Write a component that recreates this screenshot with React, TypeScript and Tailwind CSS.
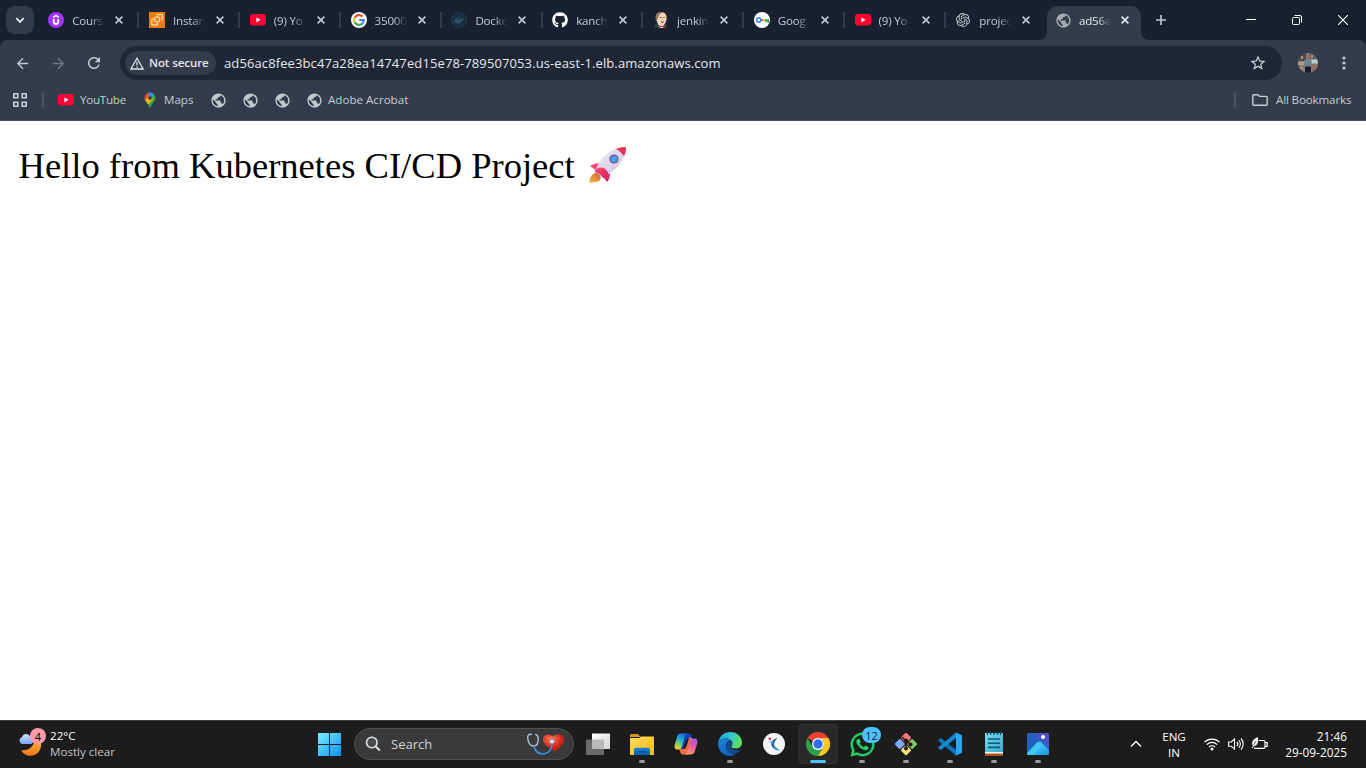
import React from "react";
import { FaGithub, FaWhatsapp } from "react-icons/fa";
import { SiOpenai, SiDocker } from "react-icons/si";
import { MdPublic, MdOutlineStarBorder, MdRefresh, MdArrowBack, MdArrowForward } from "react-icons/md";

const ui = "font-['Open_Sans','Noto_Sans',sans-serif]";

const YouTube = () => (
  <svg width="16" height="16" viewBox="0 0 16 16">
    <rect x="0" y="2" width="16" height="11.6" rx="3" fill="#ff0033" />
    <path d="M6.4 5.4v4.8l4.2-2.4z" fill="#fff" />
  </svg>
);

const Udemy = () => (
  <svg width="16" height="16" viewBox="0 0 16 16">
    <circle cx="8" cy="8" r="8" fill="#a435f0" />
    <path d="M5 5.4 8 3.6l3 1.8" fill="none" stroke="#fff" strokeWidth="1.5" />
    <path d="M5.8 7v2.7c0 3 4.4 3 4.4 0V7" fill="none" stroke="#fff" strokeWidth="1.8" />
  </svg>
);

const Aws = () => (
  <svg width="16" height="16" viewBox="0 0 16 16">
    <rect width="16" height="16" fill="#ed7d0c" />
    <g fill="none" stroke="#fff" strokeWidth="0.9">
      <rect x="5.8" y="5" width="4.8" height="4.8" rx="0.4" />
      <path d="M8 3.2V2.6h5.2v5.3h-1.1M5 7H2.8v6h5.5v-2" />
    </g>
  </svg>
);

const GoogleG = () => (
  <svg width="16" height="16" viewBox="0 0 16 16">
    <circle cx="8" cy="8" r="8" fill="#fff" />
    <g fill="none" strokeWidth="2.2">
      <path d="M11.5 4.6A4.9 4.9 0 0 0 3.7 5.7" stroke="#ea4335" />
      <path d="M3.7 5.6a4.9 4.9 0 0 0 0 4.8" stroke="#fbbc05" />
      <path d="M3.7 10.3a4.9 4.9 0 0 0 7.6 1.2" stroke="#34a853" />
      <path d="M11.2 11.6A4.9 4.9 0 0 0 12.9 8H8.2" stroke="#4285f4" />
    </g>
  </svg>
);

const Docker = () => (
  <svg width="16" height="16" viewBox="0 0 16 16">
    <circle cx="8" cy="8" r="7.4" fill="#182c3d" stroke="#244257" />
    <svg x="3" y="3" width="10" height="10">
      <SiDocker size={10} color="#2d5268" />
    </svg>
  </svg>
);

const Jenkins = () => (
  <svg width="16" height="16" viewBox="0 0 16 16">
    <path d="M1.500 16c.2-3 1.500-4.500 3-5.500h6.500c2 1 3.200 3 3.400 5.500z" fill="#33404a" />
    <path d="M4.500 10.500 7 16h3l1.500-5z" fill="#fff" />
    <path d="M3 5C3 1.700 5 .3 8 .3c3.600 0 5.600 2 5.600 5.400 0 4.600-2 7.300-4.800 7.300C5.500 13 3 9.600 3 5z" fill="#f0d6b7" />
    <path d="M3.600 9C1.600 5.500 2.500 1 6.200.4 7.500 0 9 0 10 .5 7 1 5.800 3 5 6z" fill="#8d7362" />
    <path d="M6.800 5.500h1.700M10.200 5.500h1.500M8 9.800q1.400.9 2.900 0" stroke="#5d463d" strokeWidth="1" fill="none" />
    <path d="m6.400 13 2.400 1 2.800-1v2.700L8.800 15l-2.400.7z" fill="#d33833" />
  </svg>
);

const GoogleKey = () => (
  <svg width="16" height="16" viewBox="0 0 16 16">
    <circle cx="8" cy="8" r="8" fill="#fff" />
    <circle cx="4.700" cy="8" r="2.100" fill="none" stroke="#4285f4" strokeWidth="1.600" />
    <path d="M7.200 7.200H9v1.800H7.200z" fill="#ea4335" />
    <path d="M9 7.200h2v1.800H9z" fill="#fbbc05" />
    <path d="M11 7.200h4V11h-1.500V9.200h-1v1.400H11z" fill="#34a853" />
  </svg>
);

const Maps = () => (
  <svg width="16" height="16" viewBox="0 0 16 16">
    <defs>
      <clipPath id="pin">
        <path d="M8 .5a5.400 5.400 0 0 1 5.400 5.400c0 3.500-3.400 4.400-4.600 9-.2.9-1.400.9-1.600 0-1.200-4.600-4.600-5.500-4.600-9A5.400 5.400 0 0 1 8 .5z" />
      </clipPath>
    </defs>
    <g clipPath="url(#pin)">
      <path d="M0 0h16v16H0z" fill="#34a853" />
      <path d="M1 1 8 6 2 9z" fill="#ea4335" />
      <path d="m2 10 6-8 3 5-6 7z" fill="#fbbc04" />
      <path d="M5.500 0H14L7.800 6.100z" fill="#4285f4" />
      <path d="M1 0h3.800L7 3.200 3.400 6.600z" fill="#ea4335" />
    </g>
    <circle cx="8" cy="5.900" r="1.900" fill="#343b4b" />
  </svg>
);

const Globe = () => <MdPublic size={17} color="#c4c7cc" className="-m-[0.5px]" />;

const CloseX = ({ color = "#c0c8d8" }: { color?: string }) => (
  <svg width="8" height="8" viewBox="0 0 8 8" className="shrink-0">
    <path d="m.6.6 6.800 6.800M7.400.6.6 7.400" stroke={color} strokeWidth="1.600" />
  </svg>
);

const tabs: { icon: React.ReactNode; title: string }[] = [
  { icon: <Udemy />, title: "Cours" },
  { icon: <Aws />, title: "Instan" },
  { icon: <YouTube />, title: "(9) Yo" },
  { icon: <GoogleG />, title: "35000" },
  { icon: <Docker />, title: "Docke" },
  { icon: <FaGithub size={16} color="#fff" />, title: "kanch" },
  { icon: <Jenkins />, title: "jenkin" },
  { icon: <GoogleKey />, title: "Goog" },
  { icon: <YouTube />, title: "(9) Yo" },
  { icon: <SiOpenai size={14} color="#c7cbd2" />, title: "projec" },
];

const fade = "[mask-image:linear-gradient(to_right,#000_19px,transparent_32px)]";

const TabStrip = () => (
  <div className="flex h-10 bg-[#192131] text-[11.6px] tracking-[-0.2px]">
    <div className="flex w-[38.200px] shrink-0 items-center pl-[6px]">
      <div className="flex size-7 items-center justify-center rounded-[9px] bg-[#343b4b]">
        <svg width="10" height="7" viewBox="0 0 10 7">
          <path d="m1.300 1.200 3.700 3.700 3.700-3.700" fill="none" stroke="#e3e6ec" strokeWidth="1.800" />
        </svg>
      </div>
    </div>
    {tabs.map((t, i) => (
      <div key={i} className="flex w-[100.800px] shrink-0 items-center pl-[10px]">
        <span className="flex w-4 shrink-0 justify-center">{t.icon}</span>
        <span className={`ml-2 w-[38px] shrink-0 pt-px whitespace-nowrap text-[#c4cad6] ${fade}`}>{t.title}</span>
        <span className="ml-[5px] flex"><CloseX /></span>
        {i < 9 && <span className="ml-[14.300px] h-4 w-[2px] shrink-0 bg-[#343b4b]" />}
      </div>
    ))}
    <div className="ml-[-7.200px] flex w-[110px] shrink-0 items-end">
      <svg width="8" height="8" viewBox="0 0 8 8"><path d="M8 0v8H0a8 8 0 0 0 8-8z" fill="#343b4b" /></svg>
      <div className="flex h-[34px] w-[94px] items-center rounded-t-[10px] bg-[#343b4b] pb-[6px] pl-2">
        <MdPublic size={17} color="#a9adb3" className="shrink-0" />
        <span className={`ml-[7px] w-[38px] shrink-0 pt-px whitespace-nowrap text-[#e3e6ec] ${fade}`}>ad56a</span>
        <span className="ml-[4px] flex"><CloseX color="#e3e6ec" /></span>
      </div>
      <svg width="8" height="8" viewBox="0 0 8 8"><path d="M0 0v8h8a8 8 0 0 1-8-8z" fill="#343b4b" /></svg>
    </div>
    <div className="flex flex-1 items-center pl-[7px]">
      <svg width="10" height="10" viewBox="0 0 10 10"><path d="M5 0v10M0 5h10" stroke="#c0c8d8" strokeWidth="1.600" /></svg>
      <svg width="10" height="10" viewBox="0 0 10 10" className="ml-[80px]"><path d="M0 4.500h10" stroke="#fff" /></svg>
      <svg width="10" height="10" viewBox="0 0 10 10" className="ml-[36px]">
        <g fill="none" stroke="#fff"><rect x=".5" y="2.500" width="7" height="7" rx="1" /><path d="M2.500.5H8A1.500 1.500 0 0 1 9.500 2v5.500" /></g>
      </svg>
      <svg width="10" height="10" viewBox="0 0 10 10" className="ml-[36px]"><path d="m0 0 10 10M10 0 0 10" stroke="#fff" strokeWidth="1.100" /></svg>
    </div>
  </div>
);

const Avatar = () => (
  <svg width="20" height="20" viewBox="0 0 20 20">
    <defs><clipPath id="av"><circle cx="10" cy="10" r="10" /></clipPath></defs>
    <g clipPath="url(#av)">
      <path d="M0 0h20v20H0z" fill="#8f7d70" />
      <path d="M0 0h8v8H0z" fill="#4a4b4a" /><path d="M11 0h9v6h-9z" fill="#5c6063" />
      <path d="M13 6.500h7v4h-7z" fill="#b9cbd4" /><path d="M0 9h6v3H0z" fill="#b49c8a" />
      <path d="M6 7.500c2-2 6-2 7.500 0L14 14H6z" fill="#73808d" />
      <path d="M3 3h2v3H3zM13 2h2v3h-2zM2 14h3v2H2z" fill="#ad9180" />
      <circle cx="10" cy="4" r="2.100" fill="#a66f55" />
      <path d="M7 13.500h6V20H7z" fill="#171c31" />
      <path d="M13.500 12h7v6h-7z" fill="#97705e" />
    </g>
  </svg>
);

const Toolbar = () => (
  <div className="bg-[#192131]">
    <div className="h-[81px] rounded-t-[8px] border-b border-[#4b515e] bg-[#343b4b]">
      <div className="flex h-[46px] items-center">
        <MdArrowBack size={17} color="#c0c8d8" className="ml-[13.500px]" />
        <MdArrowForward size={17} color="#6f7684" className="ml-[19px]" />
        <MdRefresh size={18} color="#c7ccd6" className="ml-[18.500px]" />
        <div className="ml-[17px] flex h-[34px] w-[1162px] items-center rounded-full bg-[#1f2737] pl-[5px]">
          <div className="flex h-6 w-[91px] items-center rounded-full bg-[#343b4b] pl-[5px]">
            <svg width="14" height="13" viewBox="0 0 14 13">
              <path d="M7 1.200 13.100 12H.9z" fill="none" stroke="#dfe2e8" strokeWidth="1.300" />
              <path d="M7 4.800v3.500M7 9.300v1.400" stroke="#dfe2e8" strokeWidth="1.300" />
            </svg>
            <span className="ml-[5px] text-[11.5px] font-semibold tracking-[-0.08px] whitespace-nowrap text-[#e3e6ec]">Not secure</span>
          </div>
          <span className="ml-2 w-[1025px] pt-px text-[13px] tracking-[0.11px] whitespace-nowrap text-[#e6e8ed]">ad56ac8fee3bc47a28ea14747ed15e78-789507053.us-east-1.elb.amazonaws.com</span>
          <MdOutlineStarBorder size={18} color="#d0d3da" />
        </div>
        <span className="ml-[16px] flex"><Avatar /></span>
        <svg width="4" height="14" viewBox="0 0 4 14" className="ml-[24px]"><g fill="#c7ccd6"><circle cx="2" cy="2" r="1.600" /><circle cx="2" cy="7" r="1.600" /><circle cx="2" cy="12" r="1.600" /></g></svg>
      </div>
      <div className="flex h-[28px] items-center text-[11.6px] tracking-[-0.25px] text-[#c7ccd6]">
        <svg width="14" height="14" viewBox="0 0 14 14" className="ml-[13px]">
          <g fill="none" stroke="#c7ccd6" strokeWidth="1.600"><path d="M.8.8h4v4h-4zM9.200.8h4v4h-4zM.8 9.200h4v4h-4zM9.200 9.200h4v4h-4z" /></g>
        </svg>
        <span className="ml-[15px] h-4 w-[2px] bg-[#4c5464]" />
        <span className="ml-[14px] flex"><YouTube /></span>
        <span className="ml-[6px] w-[46px] whitespace-nowrap">YouTube</span>
        <span className="ml-[16px] flex"><Maps /></span>
        <span className="ml-[6px] w-[30px] tracking-normal whitespace-nowrap">Maps</span>
        <span className="ml-[16px] flex gap-4"><Globe /><Globe /><Globe /><Globe /></span>
        <span className="ml-[6px] tracking-normal whitespace-nowrap">Adobe Acrobat</span>
        <span className="ml-auto h-4 w-[2px] bg-[#4c5464]" />
        <svg width="16" height="12" viewBox="0 0 16 12" className="ml-4"><path d="M.8 2v8.200c0 .6.4 1 1 1h12.400c.6 0 1-.4 1-1V3.400c0-.6-.4-1-1-1H7.600L6 .8H1.800c-.6 0-1 .4-1 1z" fill="none" stroke="#c7ccd6" strokeWidth="1.400" /></svg>
        <span className="ml-2 w-[90px] tracking-[-0.15px] whitespace-nowrap">All Bookmarks</span>
      </div>
    </div>
  </div>
);

const Rocket = () => (
  <svg width="40" height="38" viewBox="0 0 40 38" role="img" aria-label="🚀">
    <defs>
      <linearGradient id="body" x1="0" y1="0" x2="1" y2="1"><stop stopColor="#f5edfa" /><stop offset="1" stopColor="#cdbfdb" /></linearGradient>
      <linearGradient id="fin" x1="0" y1="0" x2="1" y2="1"><stop stopColor="#ff4f76" /><stop offset="1" stopColor="#d61c60" /></linearGradient>
      <linearGradient id="flame" x1="1" y1="0" x2="0" y2="1"><stop stopColor="#c56840" /><stop offset="1" stopColor="#ffb23c" /></linearGradient>
    </defs>
    <path d="M13 17c-4 0-8 1-11 3l7 5zM22 27c0 3-1 6.500-2.500 9L14 30z" fill="url(#fin)" />
    <path d="M7 26c2-8 8-17 17-21.500C29 2 34 1 38 1.500 38 6 36 12 31 19c-5 6-11 10-18 12z" fill="url(#body)" />
    <path d="M28 3c4-1.600 7-2 10-1.500C38.200 4 37.500 7 36 10.500 34 7 31 4.500 28 3z" fill="#ea3156" />
    <path d="M6.500 26c1-3.500 5-5.500 9-4 3 1.500 5 4 4.500 7L15 32c-1.500-3-4.500-5.500-8.500-6z" fill="url(#fin)" />
    <path d="M4 29c2.500-3 6.500-2.500 8 0 1.500 3 .5 6-3 6.700-3 .3-4.500.6-7.500 1.300 0-3 0-5.500 2.500-8z" fill="url(#flame)" />
    <circle cx="26" cy="13" r="4.600" fill="#615b83" /><circle cx="26" cy="13" r="3.300" fill="#459cf0" />
  </svg>
);

const Weather = () => (
  <div className="relative size-7 shrink-0">
    <svg width="28" height="28" viewBox="0 0 28 28">
      <defs>
        <linearGradient id="moon" x1="0" y1="0" x2="0" y2="1"><stop stopColor="#ffc43a" /><stop offset="1" stopColor="#f0761c" /></linearGradient>
        <linearGradient id="cloud" x1="0" y1="0" x2="0" y2="1"><stop stopColor="#cddfff" /><stop offset="1" stopColor="#78a4ee" /></linearGradient>
      </defs>
      <path d="M17 5c6.500 2 8 11 4 16.500-5 6.500-14.500 5.500-18-1.500 8 1.500 14.500-4 14-15z" fill="url(#moon)" />
      <path d="M4 14a3.700 3.700 0 0 1 0-7C5 3.500 10 3 12 6.500c4 0 5 6.500 1 7.500z" fill="url(#cloud)" />
    </svg>
    <span className="absolute -top-[2px] left-[12px] flex size-4 items-center justify-center rounded-full bg-[#ff9aa6] text-[11px] leading-none text-black">4</span>
  </div>
);

const TaskView = () => (
  <svg width="24" height="24" viewBox="0 0 24 24">
    <defs><linearGradient id="tv" x2="1" y2="1"><stop stopColor="#fff" /><stop offset="1" stopColor="#d5d5d5" /></linearGradient></defs>
    <path d="M0 7.500h18V23H0z" fill="#6a6a6a" /><path d="M6 1.500h18V17H6z" fill="url(#tv)" /><path d="M6 7.500h12V17H6z" fill="#b9b9b9" />
  </svg>
);

const Folder = () => (
  <svg width="24" height="24" viewBox="0 0 24 24">
    <defs>
      <linearGradient id="fo" x2="1" y2="1"><stop stopColor="#ffd964" /><stop offset="1" stopColor="#f9b916" /></linearGradient>
      <linearGradient id="fob" x2="0" y2="1"><stop stopColor="#1488dd" /><stop offset="1" stopColor="#0b5fae" /></linearGradient>
    </defs>
    <path d="M0 3.500C0 2.500.5 2 1.500 2H8l2.500 3H0z" fill="#d29a0b" /><path d="M0 6h9l2-1.500h13V23H0z" fill="url(#fo)" />
    <path d="M4 23v-5.500c0-1 .8-1.800 1.800-1.800h12.400c1 0 1.800.8 1.800 1.800V23z" fill="url(#fob)" /><path d="M8 19h8v1.500H8z" fill="#0a4f94" />
  </svg>
);

const Copilot = () => (
  <svg width="24" height="24" viewBox="0 0 24 24">
    <defs>
      <linearGradient id="c1" x1=".7" y1="0" x2=".3" y2="1"><stop stopColor="#1864da" /><stop offset=".45" stopColor="#24b6d0" /><stop offset=".75" stopColor="#8fd15e" /><stop offset="1" stopColor="#f5cc22" /></linearGradient>
      <linearGradient id="c2" x1=".7" y1="0" x2=".3" y2="1"><stop stopColor="#aa58ee" /><stop offset=".5" stopColor="#ec5b93" /><stop offset="1" stopColor="#ffa35c" /></linearGradient>
    </defs>
    <path d="M10 1.500h5c2 0 2.500 1.500 3 3l.6 2.500H15c-2 0-2.800 1-3.300 2.600L8.500 19 5 17z" fill="#153fae" />
    <path d="M14 22.500H9c-2 0-2.500-1.500-3-3l-.6-2.500H9c2 0 2.800-1 3.300-2.600L15.500 5 19 7z" fill="#f36a4d" />
    <path d="M7 1.500h7c-2 0-2.700 1.800-3.300 3.700l-3 9.800C7 17 6 17.500 4 17.500c-3 0-4-2-3.300-4.500l2.700-9C4 2.400 5 1.500 7 1.500z" fill="url(#c1)" />
    <path d="M17 22.500h-7c2 0 2.700-1.800 3.300-3.700l3-9.800C17 7 18 6.500 20 6.500c3 0 4 2 3.300 4.500l-2.700 9c-.6 1.600-1.600 2.500-3.600 2.500z" fill="url(#c2)" />
  </svg>
);

const Edge = () => (
  <svg width="24" height="24" viewBox="0 0 24 24">
    <defs>
      <linearGradient id="e1" x1="0" y1="0" x2="1" y2=".3"><stop stopColor="#1c9fe5" /><stop offset=".55" stopColor="#2ec4d2" /><stop offset="1" stopColor="#62df5b" /></linearGradient>
      <linearGradient id="e2" x1="0" y1="0" x2=".6" y2="1"><stop stopColor="#1c87df" /><stop offset="1" stopColor="#0e5fb9" /></linearGradient>
    </defs>
    <path d="M.2 11C.8 4.500 6 0 12.200 0 19 0 24 5 24 10.500c0 4-3 6-6.300 6-3 0-4.300-1-4.300-2 0-.8 1-1 1-3 0-3-3-5-6.500-5C4 6.500 1 8.500.2 11z" fill="url(#e1)" />
    <path d="M.2 11C1 8.500 4 6.500 7.800 6.500c2 0 4 .8 5.200 2-4 .2-5.600 4-4.600 7.500 1.400 4.500 6 6.500 10 5.500-2 1.500-4 2.500-6.500 2.500C5 24-.4 18 .2 11z" fill="url(#e2)" />
    <path d="M12 9.200c-3 1.300-4 4-3.200 7 1.200 4.500 6.200 6.800 11.200 4.300 1.500-1 2.500-2 3-3.200-4 2-8.600 1-10-2.300-.5-1.600 1.500-2 1.300-4-.1-.8-1-1.500-2.300-1.800z" fill="#124b8e" />
  </svg>
);

const Runner = () => (
  <svg width="24" height="24" viewBox="0 0 24 24">
    <circle cx="12" cy="12" r="11" fill="#f3f5f8" />
    <path d="M15.500 6C10.500 7.500 8.500 10 9.500 13.500c1 3 4 4.500 8 5-3.500-2-5.500-3.500-5.500-6 0-2.500 1.500-4.500 3.500-6.500z" fill="#1d5b97" />
    <path d="M7 9.500 11.500 9.200 10.500 12c-1-.8-2-1.600-3.500-2.500z" fill="#3aa0d2" />
    <path d="m11.800 13 5.700 5.500-6-3z" fill="#39a4d6" />
    <circle cx="7.800" cy="6.800" r="1.300" fill="#e43434" />
  </svg>
);

const Chrome = () => (
  <svg width="24" height="24" viewBox="0 0 24 24">
    <path d="M12 12 1.600 6A12 12 0 0 1 22.400 6L12 6z" fill="#e84335" />
    <path d="M1.600 6A12 12 0 0 0 12 24l5.200-9L12 12 6.800 15z" fill="#30a04c" />
    <path d="M22.400 6A12 12 0 0 1 12 24l5.200-9A6 6 0 0 0 12 6z" fill="#fcc726" />
    <circle cx="12" cy="12" r="6" fill="#fff" /><circle cx="12" cy="12" r="4.700" fill="#2e74e8" />
  </svg>
);

const WhatsApp = () => (
  <div className="relative size-6">
    <FaWhatsapp size={27} color="#24d366" stroke="#24d366" strokeWidth={9} className="-mt-[1.500px] -ml-[1.500px] max-w-none" />
    <span className="absolute -top-[5px] left-[12px] flex h-4 w-[19px] items-center justify-center rounded-full bg-[#4cc2ff] text-[11px] leading-none text-[#14232d]">12</span>
  </div>
);

const Git = () => (
  <svg width="24" height="24" viewBox="0 0 24 24">
    <g transform="rotate(45 12 12)">
      <rect x="3.800" y="3.800" width="7.600" height="7.600" rx="1" fill="#f37d7d" />
      <rect x="12.600" y="3.800" width="7.600" height="7.600" rx="1" fill="#80c463" />
      <rect x="3.800" y="12.600" width="7.600" height="7.600" rx="1" fill="#7ba8fa" />
      <rect x="12.600" y="12.600" width="7.600" height="7.600" rx="1" fill="#fae080" />
    </g>
    <path d="m8 5 4 4v8M12 8.500l4 3.500" fill="none" stroke="#291916" strokeWidth="1.500" />
    <g fill="#291916"><circle cx="12" cy="8.500" r="2" /><circle cx="12" cy="16.500" r="2" /><circle cx="16.500" cy="12.500" r="2" /></g>
  </svg>
);

const VsCode = () => (
  <svg width="24" height="24" viewBox="0 0 24 24">
    <path d="M.6 7.700 2 6.500c.5-.4 1-.3 1.500 0L18 18v5.500L.6 9c-.4-.4-.4-.9 0-1.300z" fill="#0878c5" />
    <path d="M.6 16.300 2 17.500c.5.4 1 .3 1.500 0L18 6V.5L.6 15c-.4.4-.4.9 0 1.300z" fill="#1489d6" />
    <path d="m17.500.3 5.500 2.400c.7.300 1 .8 1 1.500v15.600c0 .7-.3 1.200-1 1.500l-5.500 2.500c-.6.200-.8 0-1.200-.4.8.7 1.700.2 1.700-.9V1.400c0-1-1-1.500-1.700-.8.4-.4.6-.5 1.200-.3z" fill="#29a8f2" />
  </svg>
);

const Notepad = () => (
  <svg width="24" height="24" viewBox="0 0 24 24">
    <defs><linearGradient id="np" x2="1" y2="1"><stop stopColor="#79dced" /><stop offset="1" stopColor="#38abcd" /></linearGradient></defs>
    <path d="M3 19h18v5H3z" fill="#a85116" /><path d="M3 19h18v2.600H3z" fill="#f2f2f2" /><path d="M3 1h18v19H3z" fill="url(#np)" />
    <path d="M5.500 0v3M8.700 0v3M12 0v3M15.300 0v3M18.500 0v3" stroke="#0e5368" strokeWidth="1.300" />
    <path d="M6 7h12M6 11.200h12M6 15.400h12" stroke="#075b7b" strokeWidth="1.600" />
  </svg>
);

const Photos = () => (
  <svg width="24" height="24" viewBox="0 0 24 24">
    <defs>
      <linearGradient id="ph" x1="0" y1="1" x2="1" y2="0"><stop stopColor="#1265bc" /><stop offset=".55" stopColor="#285fc1" /><stop offset="1" stopColor="#7148ca" /></linearGradient>
      <linearGradient id="mt" x2="1" y2="1"><stop stopColor="#5be4fb" /><stop offset="1" stopColor="#1790e8" /></linearGradient>
      <clipPath id="phc"><rect x="1" y="1" width="22" height="22" rx="1.500" /></clipPath>
    </defs>
    <g clipPath="url(#phc)"><path d="M0 0h24v24H0z" fill="url(#ph)" /><path d="m1 21 10-10.500c1.500-1.500 3-1.500 4.500 0L24 19v5H1z" fill="url(#mt)" /><path d="m1 23 12-11 3 2L7 23z" fill="#52d4f6" opacity=".5" /></g>
    <circle cx="17" cy="5" r="2" fill="#fff" />
  </svg>
);

const apps: { icon: React.ReactNode; running?: boolean; active?: boolean }[] = [
  { icon: <TaskView /> },
  { icon: <Folder />, running: true },
  { icon: <Copilot /> },
  { icon: <Edge />, running: true },
  { icon: <Runner /> },
  { icon: <Chrome />, active: true },
  { icon: <WhatsApp />, running: true },
  { icon: <Git />, running: true },
  { icon: <VsCode />, running: true },
  { icon: <Notepad />, running: true },
  { icon: <Photos />, running: true },
];

const HealthArt = () => (
  <svg width="40" height="24" viewBox="0 0 40 24">
    <defs><radialGradient id="ht" cx=".4" cy=".3"><stop stopColor="#ff805b" /><stop offset="1" stopColor="#cc2018" /></radialGradient></defs>
    <path d="M29 19c-6-2.500-13-7.500-12-12.500 1-5 7-5 9.500-2 3-3 9-3 11 .5 2 5-3 11-8.500 14z" fill="url(#ht)" />
    <path d="M6 2.500C3 1.500 1.500 3 1.700 6c.5 5 3 8.500 6 8 3 0 4.500-3 4.500-7 0-3-1-4.500-3-4.500" fill="none" stroke="#acc3d6" strokeWidth="1.400" />
    <path d="M8 14c1 6 5 8 10 8 5-1 8-5 8-11" fill="none" stroke="#3b8de2" strokeWidth="1.600" />
    <circle cx="26" cy="9.500" r="2.300" fill="#e7eaf0" stroke="#85919e" />
  </svg>
);

const Taskbar = () => (
  <div className="flex h-12 items-center border-t border-[#3b3d3d] bg-[#1c1c1c] pb-px text-[11.6px] text-white">
    <div className="flex w-[318px] items-center pl-[18px]">
      <Weather />
      <div className="ml-[4px] leading-4"><div>22°C</div><div className="text-[#c5c5c5]">Mostly clear</div></div>
    </div>
    <svg width="24" height="24" viewBox="0 0 24 24" className="shrink-0">
      <defs><linearGradient id="win" x2="1" y2="1"><stop stopColor="#7eedff" /><stop offset="1" stopColor="#0793f8" /></linearGradient></defs>
      <path d="M0 1h11v11H0zm12 0h11v11H12zM0 13h11v11H0zm12 0h11v11H12z" fill="url(#win)" />
    </svg>
    <div className="ml-3 flex h-8 w-[220px] shrink-0 items-center rounded-full border border-[#505050] bg-[#3a3a3a] pl-[10px]">
      <svg width="16" height="16" viewBox="0 0 16 16"><circle cx="6.800" cy="6.500" r="5.300" fill="#484b4e" stroke="#dfe2e5" strokeWidth="1.600" /><path d="m10.800 10.500 4 4" stroke="#dfe2e5" strokeWidth="1.900" /></svg>
      <span className="ml-[10px] w-[135px] pt-px text-[13px] text-[#d2d2d2]">Search</span>
      <HealthArt />
    </div>
    <div className="ml-[2px] flex h-full">
      {apps.map((a, i) => (
        <div key={i} className="flex h-full w-11 items-center justify-center">
          <div className={`flex h-10 w-10 flex-col items-center rounded-[4px] pt-2 ${a.active ? "bg-[#292929] ring-1 ring-[#303030] ring-inset" : ""}`}>
            <span className="flex size-6 items-center justify-center">{a.icon}</span>
            {a.active && <span className="mt-1 h-[3px] w-4 rounded-full bg-[#4cc2ff]" />}
            {a.running && <span className="mt-1 h-[3px] w-[6px] rounded-full bg-[#9a9a9a]" />}
          </div>
        </div>
      ))}
    </div>
    <div className="ml-auto flex items-center pr-[19px]">
      <svg width="12" height="8" viewBox="0 0 12 8"><path d="m1 6.500 5-5 5 5" fill="none" stroke="#fff" strokeWidth="1.400" /></svg>
      <div className="ml-5 w-[24px] pt-px text-center leading-4"><div className="-mx-1">ENG</div><div>IN</div></div>
      <svg width="16" height="14" viewBox="0 0 16 14" className="ml-[18px]">
        <g fill="none" stroke="#fff" strokeWidth="1.200"><path d="M.5 5.200a10.600 10.600 0 0 1 15 0M2.800 7.600a7.400 7.400 0 0 1 10.400 0M5 10a4.200 4.200 0 0 1 6 0" /></g><circle cx="8" cy="12" r="1.500" fill="#fff" />
      </svg>
      <svg width="17" height="14" viewBox="0 0 17 14" className="ml-2">
        <g fill="none" stroke="#fff" strokeWidth="1.100"><path d="M.6 5v4.200h2.600L6.500 12V2L3.200 5zM8.800 5a3 3 0 0 1 0 4.200M10.800 3.200a5.500 5.500 0 0 1 0 7.600M13 1.500a8 8 0 0 1 0 11" /></g>
      </svg>
      <svg width="17" height="14" viewBox="0 0 17 14" className="ml-[6px]">
        <path d="M7.500 3.500h5.300c.8 0 1.200.4 1.200 1.200v5.500c0 .8-.4 1.200-1.200 1.200H4.500c-.8 0-1.200-.3-1.200-1M14.500 5.500h1.700v4h-1.700" fill="none" stroke="#fff" strokeWidth="1.200" />
        <path d="M7 0v4c0 3-2 5-5 5C0 6 1 2.500 7 0z" fill="#fff" /><path d="m1 11 4-6" stroke="#fff" /><path d="m2.500 8 2.500-4" stroke="#1c1c1c" strokeWidth=".7" />
      </svg>
      <div className="ml-[16px] w-[63px] text-right text-[11.8px] leading-4 tracking-[0.02px] whitespace-nowrap"><div>21:46</div><div>29-09-2025</div></div>
    </div>
  </div>
);

export default function App() {
  return (
    <div className={`flex h-[768px] w-[1366px] flex-col overflow-hidden bg-white ${ui}`}>
      <TabStrip />
      <Toolbar />
      <main className="flex flex-1 items-start pt-[24px] pl-[18.5px] text-black">
        <p className="font-['Liberation_Serif',serif] text-[36.550px] leading-[41px] whitespace-nowrap">Hello from Kubernetes CI/CD Project</p>
        <span className="ml-[13px] mt-px"><Rocket /></span>
      </main>
      <Taskbar />
    </div>
  );
}
